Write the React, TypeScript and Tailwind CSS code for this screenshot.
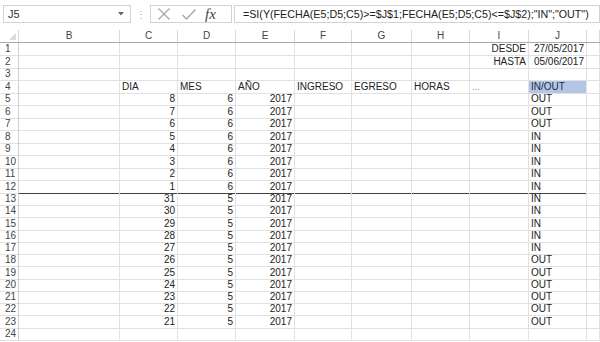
import React from "react";

// column template: row header, B..J, and a sliver of K
const gridCols =
  "grid grid-cols-[19px_101px_58px_58px_59px_57px_60px_58px_59px_58px_13px]";

const letters = ["B", "C", "D", "E", "F", "G", "H", "I", "J", ""];

interface CellData {
  t?: string;
  right?: boolean;
  cls?: string;
}

const data: [number, number, string][] = [
  [8, 6, "OUT"],
  [7, 6, "OUT"],
  [6, 6, "OUT"],
  [5, 6, "IN"],
  [4, 6, "IN"],
  [3, 6, "IN"],
  [2, 6, "IN"],
  [1, 6, "IN"],
  [31, 5, "IN"],
  [30, 5, "IN"],
  [29, 5, "IN"],
  [28, 5, "IN"],
  [27, 5, "IN"],
  [26, 5, "OUT"],
  [25, 5, "OUT"],
  [24, 5, "OUT"],
  [23, 5, "OUT"],
  [22, 5, "OUT"],
  [21, 5, "OUT"],
];

// returns the 10 cells (B..K) for a row number
const makeRow = (n: number): CellData[] => {
  const cells: CellData[] = Array.from({ length: 10 }, () => ({}));
  if (n === 1) {
    cells[7] = { t: "DESDE", right: true };
    cells[8] = { t: "27/05/2017", right: true };
  }
  if (n === 2) {
    cells[7] = { t: "HASTA", right: true };
    cells[8] = { t: "05/06/2017", right: true };
  }
  if (n === 4) {
    cells[1] = { t: "DIA" };
    cells[2] = { t: "MES" };
    cells[3] = { t: "AÑO" };
    cells[4] = { t: "INGRESO" };
    cells[5] = { t: "EGRESO" };
    cells[6] = { t: "HORAS" };
    cells[7] = { t: "...", cls: "text-[#9a9a9a]" };
    cells[8] = { t: "IN/OUT", cls: "bg-[#b4c6e7] text-[#1f2a44]" };
  }
  if (n >= 5 && n <= 23) {
    const [dia, mes, out] = data[n - 5];
    cells[1] = { t: String(dia), right: true };
    cells[2] = { t: String(mes), right: true };
    cells[3] = { t: "2017", right: true };
    cells[8] = { t: out };
  }
  return cells;
};

const App = () => {
  const rowNums = Array.from({ length: 24 }, (_, i) => i + 1);

  return (
    <div className="w-[600px] h-[342px] overflow-hidden bg-white font-['Liberation_Sans',Arial,sans-serif] text-[10px] text-[#222]">
      {/* formula bar */}
      <div className="flex items-stretch h-[18px] mt-[5px] pl-[3px]">
        <div className="relative w-[128px] border border-[#d2d2d2] flex items-center pl-[4px] text-[11px] text-[#333]">
          J5
          <svg
            className="absolute right-[6px] top-[6px]"
            width="6"
            height="4"
            viewBox="0 0 6 4"
          >
            <path d="M0 0h6L3 3.5z" fill="#666" />
          </svg>
        </div>
        <div className="w-[19px] flex items-center justify-center text-[#b0b0b0] text-[10px]">
          ⋮
        </div>
        <div className="w-[82px] border border-[#d2d2d2] flex items-center">
          <svg className="ml-[7px]" width="12" height="12" viewBox="0 0 12 12">
            <path
              d="M0.5 0.5L11.5 11.5M11.5 0.5L0.5 11.5"
              stroke="#a6a6a6"
              strokeWidth="1.2"
              fill="none"
            />
          </svg>
          <svg className="ml-[12px]" width="14" height="11" viewBox="0 0 14 11">
            <path
              d="M0.5 6L4.5 10L13.5 0.5"
              stroke="#a6a6a6"
              strokeWidth="1.3"
              fill="none"
            />
          </svg>
          <span className="ml-[9px] font-['Liberation_Serif',serif] italic text-[15px] text-[#444] leading-none">
            fx
          </span>
        </div>
        <div className="ml-[2px] flex-1 border border-[#d2d2d2] flex items-center pl-[8px] text-[10.7px] text-[#222] whitespace-nowrap overflow-hidden">
          =SI(Y(FECHA(E5;D5;C5)&gt;=$J$1;FECHA(E5;D5;C5)&lt;=$J$2);"IN";"OUT")
        </div>
      </div>

      {/* column headers */}
      <div className={`${gridCols} h-[13px] mt-[7px] border-b border-[#ababab]`}>
        <div className="relative border-r border-[#dadada]">
          <svg
            className="absolute right-[2px] bottom-[2px]"
            width="7"
            height="7"
            viewBox="0 0 7 7"
          >
            <path d="M7 0V7H0z" fill="#dcdcdc" />
          </svg>
        </div>
        {letters.map((l, i) => (
          <div
            key={i}
            className="border-r border-[#dadada] text-center text-[#444] leading-[12px]"
          >
            {l}
          </div>
        ))}
      </div>

      {/* rows */}
      {rowNums.map((n) => {
        const cells = makeRow(n);
        return (
          <div
            key={n}
            className={`${gridCols} ${n <= 12 ? "h-[12.5px]" : "h-[12.25px]"}`}
          >
            <div className="border-r border-b border-[#cfcfcf] border-b-[#e1e1e1] pl-[5px] text-[#444] leading-[12px]">
              {n}
            </div>
            {cells.map((c, i) => (
              <div
                key={i}
                className={`border-r border-b border-[#e1e1e1] px-[2px] leading-[12px] whitespace-nowrap overflow-visible ${
                  c.right ? "text-right" : "text-left"
                } ${n === 12 && i < 9 ? "border-b-[#404040]" : ""} ${
                  c.cls ?? ""
                }`}
              >
                {c.t}
              </div>
            ))}
          </div>
        );
      })}
    </div>
  );
};

export default App;
